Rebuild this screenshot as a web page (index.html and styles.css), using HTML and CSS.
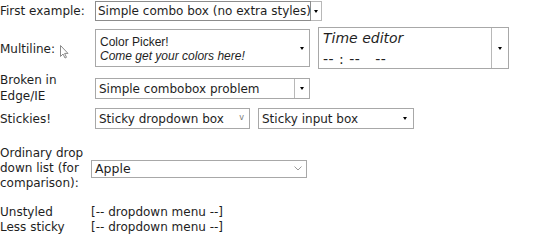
FILE: index.html
```html
<!DOCTYPE html>
<html lang="en">
  <head>
    <meta charset="UTF-8" />
    <title>Combo boxes</title>
    <link rel="stylesheet" href="styles.css">
  </head>
  <body>
    <div class="form">
      <div class="row row-first">
        <span class="label">First example:</span>
        <div class="combo">
          <span class="combo-text">Simple combo box (no extra styles)</span>
          <span class="combo-btn"><i class="tri"></i></span>
        </div>
      </div>

      <div class="row row-multi">
        <span class="label">Multiline:
          <svg class="cursor" width="11" height="15" viewBox="0 0 11 15">
            <path d="M1.5 1.5 L1.5 12.5 L4 10 L6 14 L7.5 13.3 L5.6 9.4 L9 9.4 Z" fill="#fff" stroke="#8a8a8a" stroke-width="1" stroke-linejoin="round" />
          </svg>
        </span>
        <div class="picker">
          <div class="picker-text">
            <div>Color Picker!</div>
            <div class="picker-sub">Come get your colors here!</div>
          </div>
          <i class="tri"></i>
        </div>
        <div class="timebox">
          <div class="time-text">
            <div class="time-title">Time editor</div>
            <div class="time-val">-- : --&nbsp;&nbsp;&nbsp;--</div>
          </div>
          <span class="time-btn"><i class="tri"></i></span>
        </div>
      </div>

      <div class="row row-broken">
        <span class="label">Broken in Edge/IE</span>
        <div class="broken">
          <span class="broken-text">Simple combobox problem</span>
          <span class="broken-btn"><i class="tri"></i></span>
        </div>
      </div>

      <div class="row row-sticky">
        <span class="label">Stickies!</span>
        <div class="sticky sticky-drop">
          <span>Sticky dropdown box</span>
          <span class="vee">v</span>
        </div>
        <div class="sticky sticky-input">
          <span>Sticky input box</span>
          <i class="tri"></i>
        </div>
      </div>

      <div class="row row-ordinary">
        <span class="label label-narrow">Ordinary drop down list (for comparison):</span>
        <div class="select">
          <span>Apple</span>
          <svg class="chevron" width="8" height="5" viewBox="0 0 8 5">
            <polyline points="0.5,0.5 4,4 7.5,0.5" fill="none" stroke="#9a9a9a" stroke-width="1" />
          </svg>
        </div>
      </div>

      <div class="plain">
        <span class="plain-label">Unstyled</span><span>[-- dropdown menu --]</span>
        <span class="plain-label">Less sticky</span><span>[-- dropdown menu --]</span>
      </div>
    </div>
  </body>
</html>
```

FILE: styles.css
```css
body {
  margin: 0;
  padding: 0;
  background-color: #fff;
  color: #1e1e1e;
  font-family: "DejaVu Sans", Verdana, sans-serif;
  font-size: 12px;
}
.form {
  width: 540px;
}
.row {
  display: flex;
  align-items: center;
  line-height: 16px;
}
.label {
  width: 88px;
  flex-shrink: 0;
  margin-right: 7px;
}
.tri {
  display: inline-block;
  width: 0;
  height: 0;
  border-left: 2.5px solid transparent;
  border-right: 2.5px solid transparent;
  border-top: 3.5px solid #000;
}

/* first example */
.row-first {
  margin-top: 1px;
  height: 20px;
}
.row-first .label {
  white-space: nowrap;
}
.combo {
  display: flex;
  height: 20px;
}
.combo-text {
  box-sizing: border-box;
  width: 216px;
  height: 20px;
  border: 1px solid #8c8c8c;
  padding: 1px 0 0 2px;
  white-space: nowrap;
}
.combo-btn {
  box-sizing: border-box;
  width: 11px;
  height: 20px;
  border: 1px solid #b8b8b8;
  border-left: none;
  display: flex;
  align-items: center;
  justify-content: center;
}

/* multiline */
.row-multi {
  margin-top: 6px;
  height: 42px;
}
.row-multi .label {
  display: flex;
  align-items: center;
  margin-top: 2px;
}
.cursor {
  margin-left: 4px;
  margin-top: 4px;
}
.picker {
  box-sizing: border-box;
  width: 215px;
  height: 38px;
  border: 1px solid #a8a8a8;
  display: flex;
  align-items: center;
  padding: 0 5px 0 4px;
  font-family: "Liberation Sans", Arial, sans-serif;
  font-size: 12px;
  line-height: 14px;
}
.picker-text {
  flex: 1;
  margin-top: 1px;
}
.picker-sub {
  font-style: italic;
}
.timebox {
  box-sizing: border-box;
  margin-left: 8px;
  width: 191px;
  height: 42px;
  border: 1px solid #a8a8a8;
  display: flex;
  font-size: 14px;
  line-height: 20px;
}
.time-text {
  flex: 1;
  padding: 0 0 0 4px;
}
.time-title {
  font-style: italic;
}
.time-val {
  color: #222;
  letter-spacing: 0.5px;
  margin-top: 1px;
}
.time-btn {
  width: 16px;
  border-left: 1px solid #b8b8b8;
  display: flex;
  align-items: center;
  justify-content: center;
}

/* broken */
.row-broken {
  margin-top: 3px;
  height: 32px;
}
.broken {
  box-sizing: border-box;
  width: 215px;
  height: 21px;
  border: 1px solid #a8a8a8;
  display: flex;
}
.broken-text {
  flex: 1;
  padding: 2px 0 0 3px;
  white-space: nowrap;
}
.broken-btn {
  width: 14px;
  border-left: 1px solid #b8b8b8;
  display: flex;
  align-items: center;
  justify-content: center;
}

/* stickies */
.row-sticky {
  margin-top: 4px;
  height: 21px;
}
.sticky {
  box-sizing: border-box;
  height: 21px;
  border: 1px solid #a8a8a8;
  display: flex;
  align-items: center;
  justify-content: space-between;
  padding: 0 6px 0 3px;
  white-space: nowrap;
}
.sticky-drop {
  width: 155px;
  padding-right: 5px;
}
.sticky-input {
  width: 156px;
  margin-left: 8px;
}
.vee {
  font-size: 8px;
  color: #777;
  margin-top: -2px;
}

/* ordinary select */
.row-ordinary {
  margin-top: 17px;
  line-height: 15px;
}
.label-narrow {
  width: 86px;
  margin-right: 5px;
}
.select {
  box-sizing: border-box;
  width: 216px;
  height: 18px;
  border: 1px solid #a8a8a8;
  display: flex;
  align-items: center;
  justify-content: space-between;
  padding: 0 4px 0 3px;
  font-size: 12.5px;
}

/* plain text rows */
.plain {
  margin-top: 14px;
  display: grid;
  grid-template-columns: 91px auto;
  line-height: 15px;
}
```
